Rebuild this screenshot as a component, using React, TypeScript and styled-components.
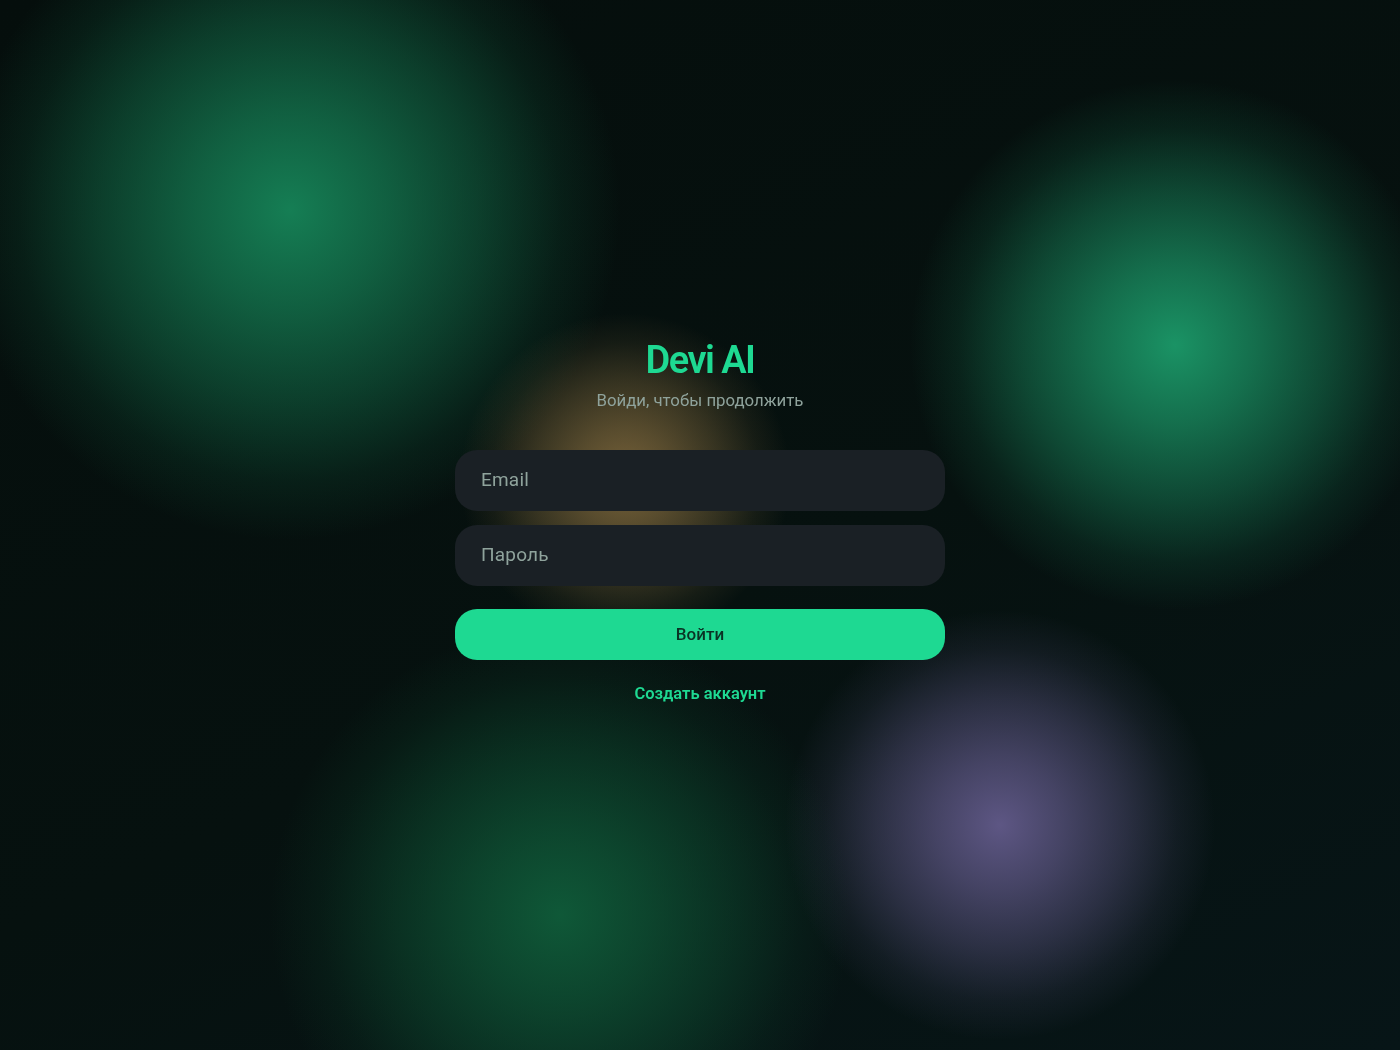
import styled, { createGlobalStyle } from "styled-components";

const GlobalStyle = createGlobalStyle`
  html, body {
    margin: 0;
    padding: 0;
    height: 100%;
    background: #050f0d;
  }
  #root {
    height: 100%;
  }
  * {
    box-sizing: border-box;
  }
`;

const Page = styled.div`
  position: relative;
  width: 100%;
  height: 100vh;
  overflow: hidden;
  display: flex;
  align-items: center;
  justify-content: center;
  padding-bottom: 8px;
  background: linear-gradient(155deg, #050e0c 0%, #06110f 55%, #071517 100%);
  font-family: Roboto, "Liberation Sans", sans-serif;
`;

const Blob = styled.div<{ $x: number; $y: number; $r: number; $rgb: string; $peak: number }>`
  position: absolute;
  left: ${(p) => p.$x - p.$r}px;
  top: ${(p) => p.$y - p.$r}px;
  width: ${(p) => p.$r * 2}px;
  height: ${(p) => p.$r * 2}px;
  border-radius: 50%;
  background: radial-gradient(
    circle closest-side,
    rgba(${(p) => p.$rgb}, ${(p) => p.$peak}) 0%,
    rgba(${(p) => p.$rgb}, ${(p) => p.$peak * 0.72}) 30%,
    rgba(${(p) => p.$rgb}, ${(p) => p.$peak * 0.42}) 58%,
    rgba(${(p) => p.$rgb}, ${(p) => p.$peak * 0.14}) 82%,
    rgba(${(p) => p.$rgb}, 0) 100%
  );
`;

const Card = styled.form`
  position: relative;
  width: 490px;
  display: flex;
  flex-direction: column;
  align-items: stretch;
  filter: blur(0.3px);
`;

const Title = styled.h1`
  margin: 0;
  text-align: center;
  color: #1ed992;
  font-size: 38px;
  line-height: 41px;
  font-weight: 600;
  letter-spacing: -1.55px;
`;

const Subtitle = styled.p`
  margin: 10px 0 40px;
  text-align: center;
  color: #8fa39c;
  font-size: 16.8px;
  line-height: 19px;
`;

const Field = styled.input`
  display: block;
  width: 100%;
  height: 61px;
  padding: 0 26px 2px;
  margin-bottom: 14px;
  border: 0;
  border-radius: 22px;
  outline: none;
  background: #1a2025;
  color: #e6eeeb;
  font-family: inherit;
  font-size: 19px;
  letter-spacing: 0.2px;

  &::placeholder {
    color: #8fa39c;
    opacity: 1;
  }
`;

const Submit = styled.button`
  height: 51px;
  margin-top: 9px;
  border: 0;
  border-radius: 22px;
  background: #1ed992;
  color: #0a3325;
  font-family: inherit;
  font-size: 17px;
  font-weight: 500;
`;

const Signup = styled.a`
  margin-top: 24px;
  text-align: center;
  color: #1ed992;
  font-size: 16.5px;
  line-height: 19px;
  font-weight: 600;
  cursor: pointer;
`;

export default function App() {
  return (
    <Page>
      <GlobalStyle />
      <Blob $x={290} $y={210} $r={330} $rgb="22, 132, 88" $peak={0.95} />
      <Blob $x={1175} $y={345} $r={265} $rgb="28, 158, 108" $peak={0.92} />
      <Blob $x={560} $y={915} $r={290} $rgb="16, 96, 60" $peak={0.9} />
      <Blob $x={1000} $y={825} $r={215} $rgb="98, 90, 138" $peak={0.95} />
      <Blob $x={625} $y={478} $r={165} $rgb="126, 103, 60" $peak={0.95} />
      <Card onSubmit={(e) => e.preventDefault()}>
        <Title>Devi AI</Title>
        <Subtitle>Войди, чтобы продолжить</Subtitle>
        <Field type="email" placeholder="Email" />
        <Field type="password" placeholder="Пароль" />
        <Submit type="submit">Войти</Submit>
        <Signup>Создать аккаунт</Signup>
      </Card>
    </Page>
  );
}
